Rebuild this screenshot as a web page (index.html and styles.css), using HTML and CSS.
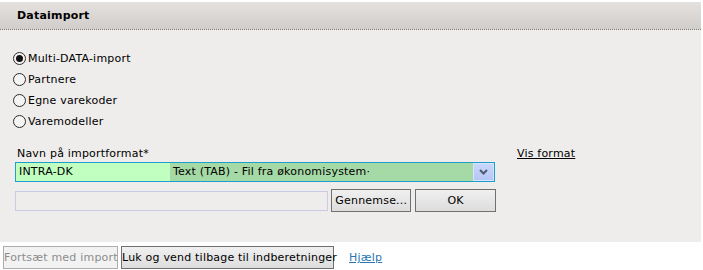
FILE: index.html
```html
<!DOCTYPE html>
<html lang="da">
<head>
<meta charset="utf-8">
<title>Dataimport</title>
<link rel="stylesheet" href="styles.css">
</head>
<body>
<div class="panel">
  <div class="panel-header">Dataimport</div>
  <div class="panel-body">
    <div class="radio-list">
      <label class="radio-row"><span class="radio checked"></span>Multi-DATA-import</label>
      <label class="radio-row"><span class="radio"></span>Partnere</label>
      <label class="radio-row"><span class="radio"></span>Egne varekoder</label>
      <label class="radio-row"><span class="radio"></span>Varemodeller</label>
    </div>
    <div class="format-row">
      <div class="format-col">
        <div class="field-label">Navn på importformat*</div>
        <div class="combo">
          <span class="combo-name">INTRA-DK</span>
          <span class="combo-desc">Text (TAB) - Fil fra økonomisystem·</span>
          <span class="combo-btn">
            <svg width="9" height="6" viewBox="0 0 9 6"><path d="M1 1 L4.5 4.5 L8 1" fill="none" stroke="#4d5b73" stroke-width="2"/></svg>
          </span>
        </div>
        <div class="file-row">
          <span class="file-box"></span>
          <button class="btn btn-browse">Gennemse...</button>
          <button class="btn btn-ok">OK</button>
        </div>
      </div>
      <a class="vis-link" href="#">Vis format</a>
    </div>
  </div>
</div>
<div class="footer">
  <button class="btn btn-disabled">Fortsæt med import</button>
  <button class="btn btn-close">Luk og vend tilbage til indberetninger</button>
  <a class="help-link" href="#">Hjælp</a>
</div>
</body>
</html>
```
FILE: styles.css
```css
html, body {
  margin: 0;
  padding: 0;
  background: #ffffff;
  font-family: "DejaVu Sans", Verdana, sans-serif;
  font-size: 11px;
  letter-spacing: 0.2px;
  color: #000;
}

.panel {
  width: 701px;
  margin-top: 2px;
  background: #eeedeb;
  height: 240px;
}

.panel-header {
  height: 28px;
  box-sizing: border-box;
  padding: 7px 0 0 17px;
  font-weight: bold;
  line-height: 14px;
  background: linear-gradient(#e4e1de, #d0cdca);
  border-bottom: 1px dotted #7a7a7a;
}

.panel-body {
  padding: 18px 0 0 13px;
}

.radio-list {
  display: flex;
  flex-direction: column;
}

.radio-row {
  display: flex;
  align-items: center;
  height: 21px;
}

.radio {
  width: 11px;
  height: 11px;
  border: 1px solid #2b2b2b;
  border-radius: 50%;
  background: #f4f4f4;
  margin-right: 2px;
  display: flex;
  align-items: center;
  justify-content: center;
}

.radio.checked::after {
  content: "";
  width: 7px;
  height: 7px;
  border-radius: 50%;
  background: #111;
}

.format-row {
  display: flex;
  align-items: flex-start;
  margin-top: 15px;
  margin-left: 2px;
}

.format-col {
  display: flex;
  flex-direction: column;
  width: 481px;
}

.field-label {
  line-height: 14px;
  padding-left: 2px;
  margin-bottom: 1px;
}

.combo {
  display: flex;
  height: 20px;
  width: 480px;
  box-sizing: border-box;
  border: 1px solid #1e9fcb;
  line-height: 18px;
}

.combo-name {
  width: 154px;
  background: #c0ffc0;
  padding-left: 3px;
  box-sizing: border-box;
}

.combo-desc {
  flex: 1;
  background: #a5d9a5;
  padding-left: 3px;
}

.combo-btn {
  width: 21px;
  background: linear-gradient(#c9d6fb, #b5c7f6);
  border: 1px solid #d8e2fc;
  box-sizing: border-box;
  display: flex;
  align-items: center;
  justify-content: center;
}

.file-row {
  display: flex;
  align-items: center;
  margin-top: 7px;
}

.file-box {
  width: 314px;
  height: 20px;
  box-sizing: border-box;
  border: 1px solid #c7cbe6;
  background: #eeedeb;
}

.btn {
  font-family: "DejaVu Sans", Verdana, sans-serif;
  font-size: 11px;
  letter-spacing: 0.2px;
  height: 23px;
  box-sizing: border-box;
  border: 1px solid #707070;
  border-radius: 0;
  background: linear-gradient(#f0f0f0, #dddddd);
  color: #000;
  padding: 0;
  margin: 0;
  white-space: nowrap;
}

.btn-browse {
  width: 80px;
  margin-left: 3px;
}

.btn-ok {
  width: 81px;
  margin-left: 4px;
}

.vis-link {
  margin-left: 21px;
  line-height: 14px;
  color: #000;
  text-decoration: underline;
}

.footer {
  display: flex;
  align-items: center;
  padding: 4px 0 0 3px;
}

.btn-disabled {
  width: 115px;
  color: #8d8d8d;
  border-color: #adadad;
  background: #f2f2f2;
}

.btn-close {
  width: 213px;
  margin-left: 3px;
}

.help-link {
  margin-left: 15px;
  color: #2a77b3;
  text-decoration: underline;
}
```
